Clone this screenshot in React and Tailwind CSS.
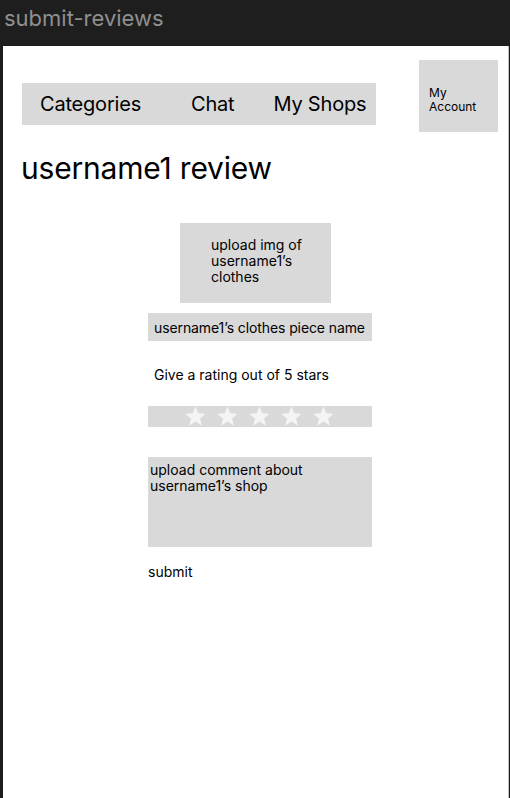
import React from 'react';

const Star = () => (
  <svg width="23" height="20" viewBox="0 0 24 21" className="fill-[#f4f4f4]">
    <polygon points="12,0.5 14.9,7.7 22.8,8.1 16.7,13.1 18.8,20.8 12,16.4 5.2,20.8 7.3,13.1 1.2,8.1 9.1,7.7" />
  </svg>
);

function App() {
  return (
    <div className="w-[510px] h-[798px] bg-[#1e1e1e] flex flex-col font-['Inter',sans-serif] overflow-hidden">
      {/* frame name */}
      <div className="h-[46px] shrink-0 pl-[4px] pt-[4px] text-[22px] leading-[28px] text-[#8f8f8f]">
        submit-reviews
      </div>

      {/* frame */}
      <div className="ml-[3px] mr-[1px] flex-1 bg-white border-r border-[#bdbdbd] flex flex-col text-black">
        <div className="flex items-start pt-[14px]">
          <nav className="mt-[23px] ml-[19px] w-[354px] h-[42px] bg-[#d9d9d9] flex items-center text-[20px] tracking-[-0.2px]">
            <span className="ml-[18px]">Categories</span>
            <span className="ml-[50px]">Chat</span>
            <span className="ml-[39px]">My Shops</span>
          </nav>
          <div className="ml-[43px] w-[79px] h-[72px] bg-[#d9d9d9] flex items-center pl-[10px] pt-[7px] text-[12px] leading-[14px]">
            <span>My<br />Account</span>
          </div>
        </div>

        <h1 className="mt-[18px] ml-[18px] text-[30px] leading-[36px] tracking-[-0.2px]">username1 review</h1>

        <div className="mt-[37px] ml-[177px] w-[151px] h-[80px] bg-[#d9d9d9] pl-[31px] pt-[14px] text-[14px] leading-[16px]">
          upload img of<br />username1’s<br />clothes
        </div>

        <div className="mt-[10px] ml-[145px] w-[224px] h-[28px] bg-[#d9d9d9] pl-[6px] flex items-center text-[14px] tracking-[-0.1px]">
          username1’s clothes piece name
        </div>

        <div className="mt-[25px] ml-[151px] text-[14px] leading-[18px]">Give a rating out of 5 stars</div>

        <div className="mt-[22px] ml-[145px] w-[224px] h-[21px] bg-[#d9d9d9] flex items-center pl-[36px] gap-[9px] pb-[1px]">
          <Star />
          <Star />
          <Star />
          <Star />
          <Star />
        </div>

        <div className="mt-[30px] ml-[145px] w-[224px] h-[90px] bg-[#d9d9d9] pl-[2px] pt-[5px] text-[14px] leading-[16px]">
          upload comment about<br />username1’s shop
        </div>

        <div className="mt-[16px] ml-[145px] text-[14px] leading-[18px]">submit</div>
      </div>
    </div>
  );
}

export default App;
